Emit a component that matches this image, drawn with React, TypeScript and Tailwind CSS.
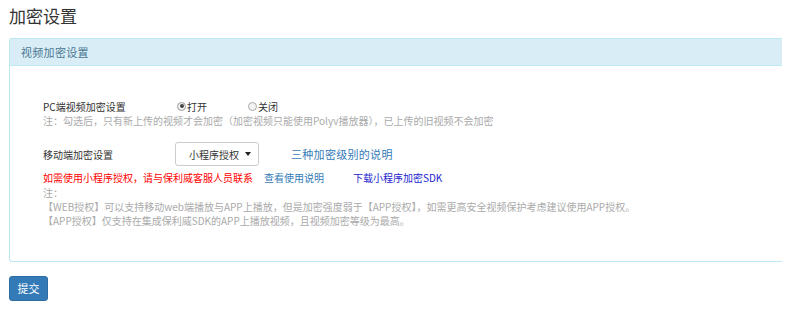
export default function App() {
  return (
    <div
      className="w-[800px] h-[310px] bg-white px-[9px] pt-[5px] overflow-hidden text-[#333]"
      style={{ fontFamily: '"Noto Sans CJK SC", "Noto Sans", sans-serif' }}
    >
      {/* Page title */}
      <h1 className="text-[17px] leading-[22px] font-normal text-[#333]">加密设置</h1>

      {/* Panel */}
      <div className="mt-[11px] w-[773px] border border-r-0 border-[#bce8f1] rounded-l-[3px] bg-white">
        <div className="h-[27px] bg-[#d9edf7] border-b border-[#bce8f1] flex items-center pl-[11px] text-[11px] tracking-[0.3px] text-[#4a7890]">
          视频加密设置
        </div>

        <div className="pl-[33px] pt-[32px] pb-[33px] text-[10px]">
          {/* PC row */}
          <div className="flex items-center h-[16px]">
            <div className="w-[134px] text-[#333]">PC端视频加密设置</div>
            <label className="w-[71px] flex items-center">
              <span className="w-[9px] h-[9px] rounded-full border border-[#999] bg-[#f3f3f3] flex items-center justify-center">
                <span className="w-[4px] h-[4px] rounded-full bg-[#444]" />
              </span>
              <span className="ml-[1px]">打开</span>
            </label>
            <label className="flex items-center">
              <span className="w-[9px] h-[9px] rounded-full border border-[#aaa] bg-[#f3f3f3]" />
              <span className="ml-[1px]">关闭</span>
            </label>
          </div>
          <p className="leading-[14px] text-[#aaa]">
            注：勾选后，只有新上传的视频才会加密（加密视频只能使用Polyv播放器），已上传的旧视频不会加密
          </p>

          {/* Mobile row */}
          <div className="flex items-center mt-[14px] h-[24px]">
            <div className="w-[132px] text-[#333]">移动端加密设置</div>
            <div className="w-[84px] h-[24px] border border-[#ccc] rounded-[3px] flex items-center pl-[13px] pr-[7px] justify-between">
              <span>小程序授权</span>
              <span className="w-0 h-0 border-l-[3px] border-r-[3px] border-t-[4px] border-l-transparent border-r-transparent border-t-[#222]" />
            </div>
            <a className="ml-[32px] text-[11px] tracking-[0.3px] text-[#337ab7]">三种加密级别的说明</a>
          </div>

          <div className="flex items-center mt-[5px] leading-[14px]">
            <span className="text-[#ff0000]">如需使用小程序授权，请与保利威客服人员联系</span>
            <a className="ml-[11px] text-[#337ab7]">查看使用说明</a>
            <a className="ml-[29px] text-[#2323d0]">下载小程序加密SDK</a>
          </div>
          <div className="mt-[1px] leading-[14px] text-[#aaa]">
            <p>注：</p>
            <p>【WEB授权】可以支持移动web端播放与APP上播放，但是加密强度弱于【APP授权】，如需更高安全视频保护考虑建议使用APP授权。</p>
            <p>【APP授权】仅支持在集成保利威SDK的APP上播放视频，且视频加密等级为最高。</p>
          </div>
        </div>
      </div>

      {/* Submit */}
      <button className="mt-[14px] w-[39px] h-[25px] bg-[#337ab7] border border-[#2e6da4] rounded-[3px] text-white text-[11px] flex items-center justify-center">
        提交
      </button>
    </div>
  );
}
